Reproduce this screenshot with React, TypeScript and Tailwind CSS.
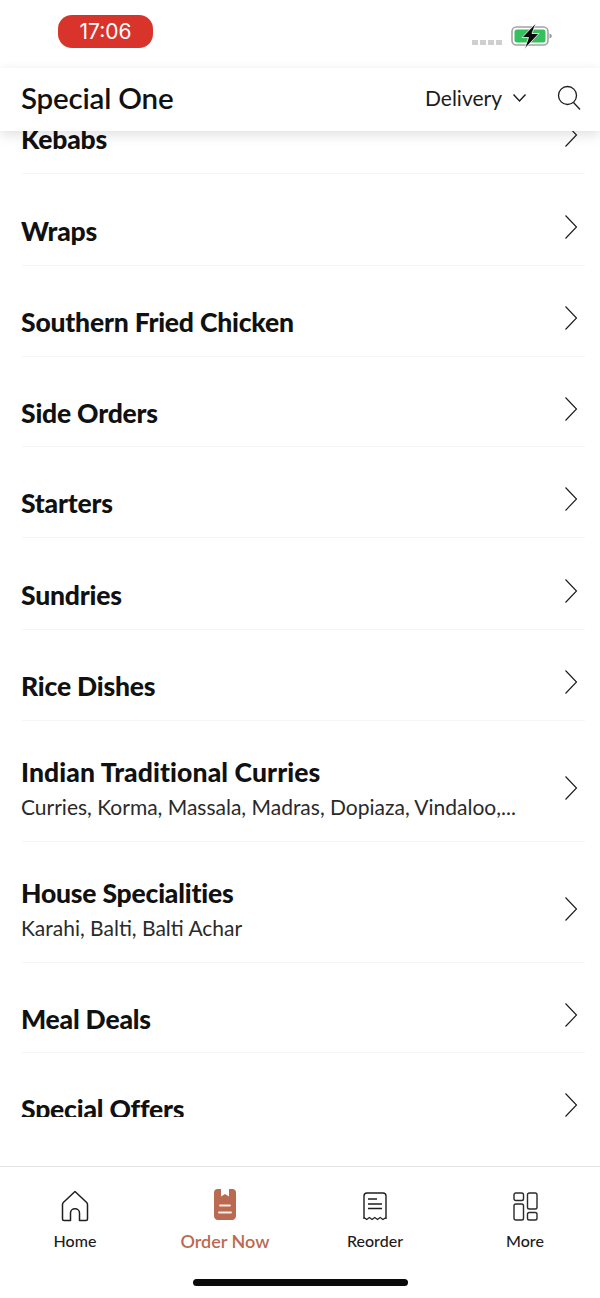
const categories = [
  { name: 'Kebabs', height: 'h-[91px]' },
  { name: 'Wraps', height: 'h-[92px]' },
  { name: 'Southern Fried Chicken', height: 'h-[91px]' },
  { name: 'Side Orders', height: 'h-[90px]' },
  { name: 'Starters', height: 'h-[91px]' },
  { name: 'Sundries', height: 'h-[92px]' },
  { name: 'Rice Dishes', height: 'h-[91px]' },
  {
    name: 'Indian Traditional Curries',
    sub: 'Curries, Korma, Massala, Madras, Dopiaza, Vindaloo,...',
    height: 'h-[121px]',
    wide: true,
  },
  { name: 'House Specialities', sub: 'Karahi, Balti, Balti Achar', height: 'h-[121px]' },
  { name: 'Meal Deals', height: 'h-[90px]' },
  { name: 'Special Offers', height: 'h-[91px]' },
]

const Chevron = () => (
  <svg width="16" height="26" viewBox="0 0 16 26" fill="none" stroke="#1c1c1c" strokeWidth="1.150">
    <path d="M2.500 1.500 13.500 13 2.500 24.500" />
  </svg>
)

const BatteryIcon = () => (
  <svg width="44" height="26" viewBox="0 0 44 26" fill="none">
    <rect x="1" y="4" width="36" height="18" rx="4.500" fill="#fff" stroke="#a3a3a3" strokeWidth="1.600" />
    <rect x="3.500" y="6.500" width="31" height="13" rx="2.500" fill="#34c05c" />
    <path d="M38.500 10.500c1.600.4 2.300 1.300 2.300 2.500s-.7 2.100-2.300 2.500z" fill="#9a9a9a" />
    <path d="M25 0 11 14.500h6.500L13.500 26 28 10.500h-7z" fill="#0b0b0b" stroke="#fff" strokeWidth="0.800" />
  </svg>
)

const HomeIcon = () => (
  <svg width="28" height="32" viewBox="0 0 28 32" fill="none" stroke="#1f1f1f" strokeWidth="1.500" strokeLinejoin="round">
    <path d="M14 1.500 2.300 12.500c-.6.6-.8 1.100-.8 2V29c0 1 .5 1.500 1.500 1.500h6.500V23c0-2.500 2-4.200 4.500-4.200s4.500 1.700 4.500 4.200v7.500H25c1 0 1.500-.5 1.500-1.500V14.500c0-.9-.2-1.400-.8-2z" />
  </svg>
)

const OrderIcon = () => (
  <svg width="22" height="31" viewBox="0 0 22 31" fill="none">
    <path
      d="M3.500 0H7v7.500L11 5l4 2.500V0h3.500C20.500 0 22 1.500 22 3.500V27c0 2.200-1.600 4-3.800 4H3.800C1.600 31 0 29.200 0 27V3.500C0 1.500 1.500 0 3.500 0z"
      fill="#bb6a52"
    />
    <path d="M6 16.500h10M5 23.500h12" stroke="#fbeee9" strokeWidth="1.800" strokeLinecap="round" />
  </svg>
)

const ReceiptIcon = () => (
  <svg width="24" height="29" viewBox="0 0 24 29" fill="none" stroke="#1f1f1f" strokeWidth="1.400">
    <path d="M1 27V4c0-2 1-3 3-3h16c2 0 3 1 3 3v23" strokeLinejoin="round" />
    <path d="M1 25.500 3.700 27.500 6.400 25.500 9.100 27.500 11.800 25.500 14.500 27.500 17.200 25.500 19.900 27.500 23 25.500" strokeWidth="1.100" />
    <path d="M5 7h9M5 12h14M5 16.500h14" />
  </svg>
)

const MoreIcon = () => (
  <svg width="25" height="29" viewBox="0 0 25 29" fill="none" stroke="#2a2a2a" strokeWidth="1.400">
    <rect x="1" y="1" width="9.500" height="7.500" rx="1.800" />
    <rect x="1" y="12" width="9.500" height="16" rx="1.800" />
    <rect x="14.500" y="1" width="9.500" height="16" rx="1.800" />
    <rect x="14.500" y="20.500" width="9.500" height="7.500" rx="1.800" />
  </svg>
)

const tabs = [
  { label: 'Home', icon: <HomeIcon />, active: false },
  { label: 'Order Now', icon: <OrderIcon />, active: true },
  { label: 'Reorder', icon: <ReceiptIcon />, active: false },
  { label: 'More', icon: <MoreIcon />, active: false },
]

export default function App() {
  return (
    <div className="flex h-[1298px] w-[600px] flex-col overflow-hidden bg-white font-['Lato','Noto_Sans',sans-serif] text-[#111]">
      {/* Status bar */}
      <div className="flex h-[68px] shrink-0 justify-between pl-[58px] pr-[45px] pt-[15px]">
        <div className="flex h-[33px] w-[95px] items-center justify-center rounded-[14px] bg-[#d9342b] font-['Inter',sans-serif] text-[21px] text-white">
          17:06
        </div>
        <div className="flex items-start gap-[9px] pt-[8px]">
          <div className="mt-[17px] flex gap-[2px]">
            <span className="h-[5px] w-[6px] bg-[#cfcfcf]" />
            <span className="h-[5px] w-[6px] bg-[#cfcfcf]" />
            <span className="h-[5px] w-[6px] bg-[#cfcfcf]" />
            <span className="h-[5px] w-[6px] bg-[#cfcfcf]" />
          </div>
          <BatteryIcon />
        </div>
      </div>

      {/* Header */}
      <div className="relative z-10 flex h-[63px] shrink-0 items-center justify-between bg-white pb-[4px] pl-[21px] pr-[19px] shadow-[0_4px_12px_rgba(0,0,0,0.12)]">
        <h1 className="text-[29.500px] font-semibold leading-none tracking-[-0.2px]">Special One</h1>
        <div className="flex items-center">
          <span className="text-[21px] text-[#1c1c1c]">Delivery</span>
          <svg className="ml-[10px]" width="15" height="10" viewBox="0 0 15 10" fill="none" stroke="#1c1c1c" strokeWidth="1.400">
            <path d="M1.500 1.500 7.500 8l6-6.500" />
          </svg>
          <svg className="ml-[30px]" width="24" height="26" viewBox="0 0 24 26" fill="none" stroke="#1c1c1c" strokeWidth="1.300">
            <circle cx="10.500" cy="10.500" r="9" />
            <path d="M16.500 17.500 23 24.500" />
          </svg>
        </div>
      </div>

      {/* Category list, scrolled */}
      <div className="h-[986px] shrink-0 overflow-hidden">
        <div className="-mt-[48px]">
          {categories.map((item) => (
            <div
              key={item.name}
              className={`ml-[22px] mr-[15px] flex items-center justify-between border-b border-[#f5f5f5] pt-[14px] ${item.height}`}
            >
              <div className={item.sub ? '-ml-px mt-[1px] min-w-0' : '-ml-px mt-[8px] min-w-0'}>
                <div
                  className={
                    item.wide
                      ? 'text-[26.500px] font-black leading-[34px] tracking-[0.1px] text-[#111]'
                      : 'text-[26.500px] font-black leading-[34px] tracking-[-0.2px] text-[#111]'
                  }
                >
                  {item.name}
                </div>
                {item.sub && <div className="mt-[3px] text-[21px] leading-[30px] text-[#2a2a2a]">{item.sub}</div>}
              </div>
              <div className="mr-[6px] shrink-0">
                <Chevron />
              </div>
            </div>
          ))}
        </div>
      </div>

      {/* Tab bar */}
      <div className="relative mt-[49px] flex-1 border-t border-[#e4e4e4] bg-white">
        <div className="grid grid-cols-4 pt-[23px]">
          {tabs.map((tab) => (
            <div key={tab.label} className="flex flex-col items-center">
              <div className={tab.active ? 'flex h-[32px] -translate-y-[2px] items-center justify-center' : 'flex h-[32px] items-center justify-center'}>
                {tab.icon}
              </div>
              <span
                className={
                  tab.active
                    ? 'mt-[5px] text-[18px] font-semibold leading-[28px] text-[#bb6a52]'
                    : 'mt-[7px] text-[16px] font-medium leading-[24px] text-[#1c1c1c]'
                }
              >
                {tab.label}
              </span>
            </div>
          ))}
        </div>
        <div className="absolute bottom-[12px] left-[193px] h-[7px] w-[215px] rounded-full bg-[#0a0a0a]" />
      </div>
    </div>
  )
}
